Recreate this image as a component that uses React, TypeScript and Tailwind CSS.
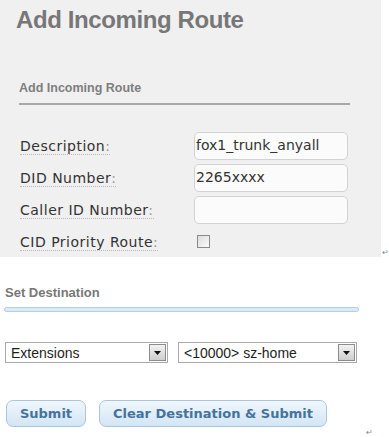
import React from 'react'

const labelFont = { fontFamily: '"DejaVu Sans", Verdana, sans-serif' }
const arialFont = { fontFamily: '"Liberation Sans", Arial, sans-serif' }

function FieldLabel({ text }: { text: string }) {
  return (
    <span className="inline-block leading-[16px] text-[14px] tracking-[0.5px] text-[#333] border-b border-dotted border-[#b8b8b8]">
      {text}
      <span className="text-[#9a9a9a]">:</span>
    </span>
  )
}

function TextBox({ value }: { value?: string }) {
  return (
    <div className="w-[154px] h-[28px] rounded-[5px] border border-[#d2d2d2] bg-[#fbfbfb] px-[1px] flex items-center text-[14px] text-[#333]">
      {value}
    </div>
  )
}

function FakeSelect({ value, width }: { value: string; width: string }) {
  return (
    <div className={`${width} h-[21px] border border-[#a9a9a9] bg-white flex items-center justify-between pl-[5px] pr-[1px]`}>
      <span className="text-[14px] leading-none text-[#1e1e1e]" style={arialFont}>
        {value}
      </span>
      <span className="w-[17px] h-[17px] border border-[#8c8c8c] bg-gradient-to-b from-[#f2f2f2] to-[#cfcfcf] flex items-center justify-center">
        <svg width="7" height="4" viewBox="0 0 7 4">
          <path d="M0 0h7L3.5 4z" fill="#111" />
        </svg>
      </span>
    </div>
  )
}

function BlueButton({ label, width }: { label: string; width: string }) {
  return (
    <button
      className={`${width} h-[27px] rounded-[7px] border border-[#a9c6de] bg-gradient-to-b from-[#f0f7fd] to-[#d3e5f4] text-[13px] font-bold text-[#44739e]`}
      style={labelFont}
    >
      {label}
    </button>
  )
}

export default function App() {
  const rows = [
    { label: 'Description', value: 'fox1_trunk_anyall' },
    { label: 'DID Number', value: '2265xxxx' },
    { label: 'Caller ID Number', value: '' },
  ]

  return (
    <div className="w-[389px] h-[437px] bg-white overflow-hidden">
      {/* grey form panel */}
      <div className="flex items-end">
        <div className="w-[385px] h-[257px] bg-[#f0f0f0] pt-[8px] overflow-hidden">
          <h1
            className="pl-4 text-[24px] leading-none font-bold tracking-[-0.4px] text-[#777]"
            style={arialFont}
          >
            Add Incoming Route
          </h1>
          <div className="ml-[19px] w-[331px] mt-[50px] pb-[8px] border-b-2 border-[#a8a8a8]">
            <div className="text-[12.5px] leading-none font-bold text-[#7e7e7e]" style={arialFont}>
              Add Incoming Route
            </div>
          </div>

          <div className="mt-[25px]" style={labelFont}>
            {rows.map((r) => (
              <div key={r.label} className="h-[32px] flex items-center pl-5">
                <div className="w-[174px]">
                  <FieldLabel text={r.label} />
                </div>
                <TextBox value={r.value} />
              </div>
            ))}
            <div className="h-[32px] flex items-center pl-5">
              <div className="w-[174px]">
                <FieldLabel text="CID Priority Route" />
              </div>
              <span className="ml-[3px] w-[13px] h-[13px] border border-[#8a8a8a] bg-gradient-to-br from-[#dcdcdc] to-[#fbfbfb]" />
            </div>
          </div>
        </div>
        <span className="ml-[1px] mb-[1px] text-[8px] leading-none text-[#888]">↵</span>
      </div>

      {/* destination */}
      <div className="pt-[29px]">
        <div className="pl-[5px] text-[13px] leading-none font-bold text-[#777]" style={arialFont}>
          Set Destination
        </div>
        <div className="ml-[4px] mt-[8px] w-[355px] h-[5px] rounded-full border border-[#b2cde8] bg-[#dde9f5]" />

        <div className="mt-[30px] flex items-center pl-[5px] gap-[10px]">
          <FakeSelect value="Extensions" width="w-[163px]" />
          <FakeSelect value="<10000> sz-home" width="w-[179px]" />
        </div>

        <div className="mt-[37px] flex items-center pl-[6px] gap-[13px]">
          <BlueButton label="Submit" width="w-[80px]" />
          <BlueButton label="Clear Destination & Submit" width="w-[228px]" />
        </div>

        <div className="pl-[366px] mt-[1px] text-[8px] leading-none text-[#888]">↵</div>
      </div>
    </div>
  )
}
